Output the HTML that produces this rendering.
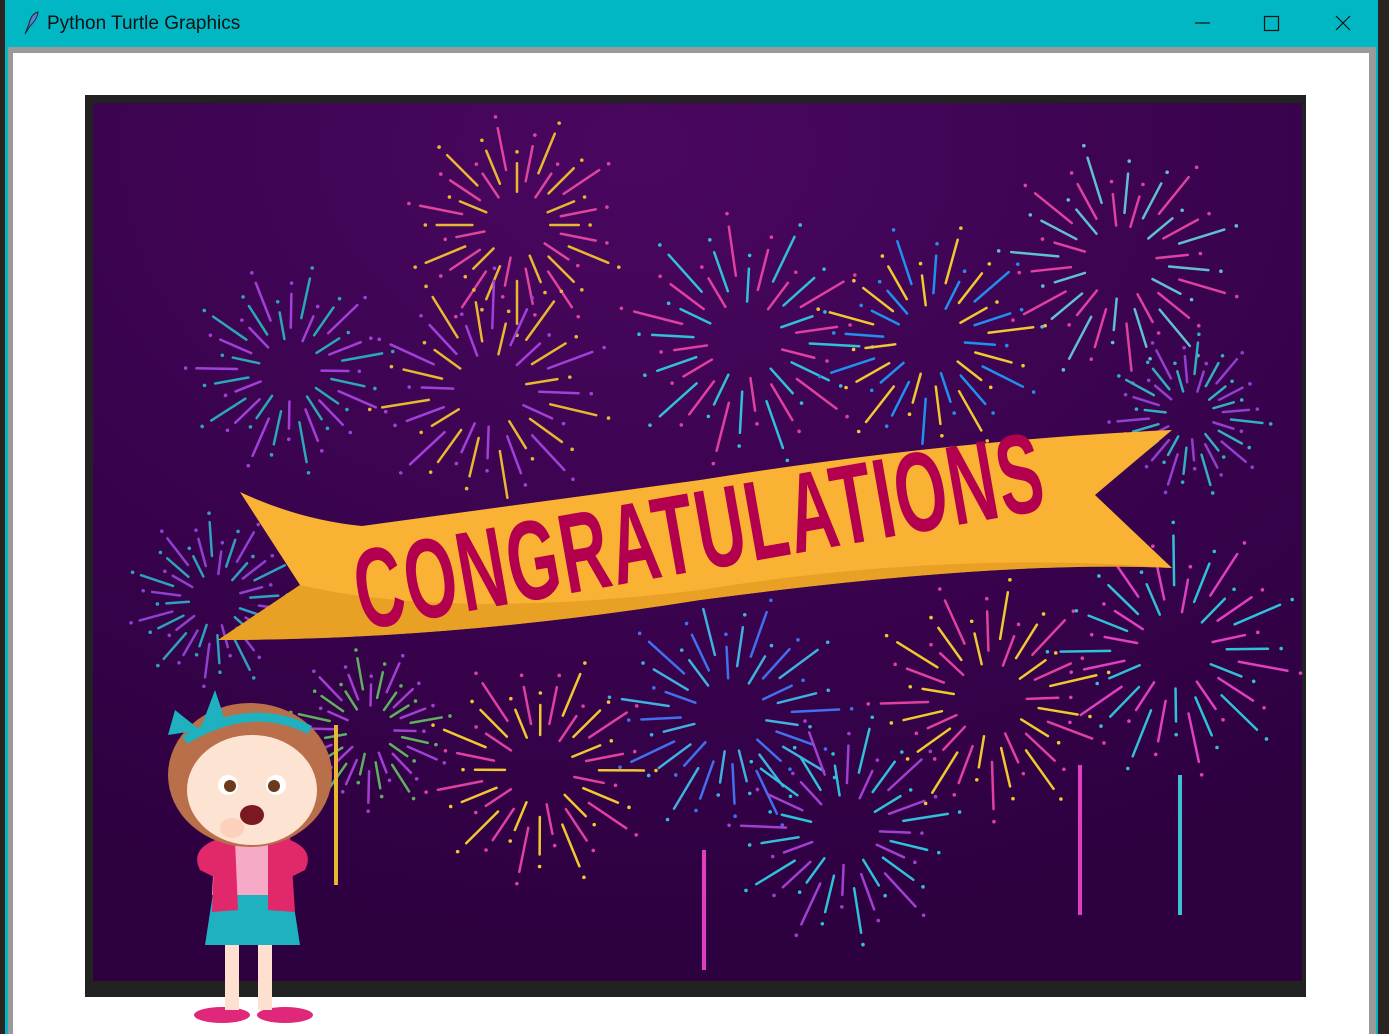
<!DOCTYPE html>
<html><head><meta charset="utf-8"><style>
html,body{margin:0;padding:0;width:1389px;height:1034px;overflow:hidden;background:#2a2520;font-family:"Liberation Sans",sans-serif}
#win{position:absolute;left:5px;top:0;width:1373px;height:1034px;background:#00b7c3}
#title{position:absolute;left:42px;top:13px;font-size:19px;color:#111}
#frame{position:absolute;left:3px;top:47px;width:1368px;height:987px;background:#9a9a9a}
#white{position:absolute;left:5px;top:6px;width:1356px;height:981px;background:#fff}
</style></head><body>
<div id="win">
<svg style="position:absolute;left:16px;top:10px" width="20" height="26" viewBox="0 0 20 26"><path d="M4 24 L8 14 Q10 4 17 2 Q16 10 9 16 Z" fill="#5a7fd0" stroke="#223" stroke-width="1"/></svg>
<div id="title">Python Turtle Graphics</div>
<svg style="position:absolute;left:1185px;top:10px" width="180" height="28"><line x1="5" y1="13" x2="20" y2="13" stroke="#111" stroke-width="1.2"/><rect x="74.5" y="6.5" width="14" height="14" fill="none" stroke="#111" stroke-width="1.2"/><path d="M146 6 L160 20 M160 6 L146 20" stroke="#111" stroke-width="1.2"/></svg>
<div id="frame"><div id="white"></div></div>
</div>
<svg id="art" style="position:absolute;left:0;top:0" width="1389" height="1034">
<defs>
<radialGradient id="bg" cx="0.45" cy="0.05" r="0.9"><stop offset="0" stop-color="#4a0760"/><stop offset="1" stop-color="#2d0040"/></radialGradient>
</defs>
<rect x="85" y="95" width="1221" height="902" fill="#222"/>
<rect x="93" y="103" width="1209" height="878" fill="url(#bg)"/>
<g id="fw"></g>
<path d="M240 492 Q300 520 362 526 L700 480 Q950 440 1172 430 L1095 495 L1172 568 Q1000 560 700 600 Q450 640 218 640 L300 585 Z" fill="#f9b233"/>
<path d="M218 640 L300 585 Q450 620 700 590 Q950 550 1172 568 Q1000 560 700 600 Q450 640 218 640Z" fill="#e19a20" opacity="0.7"/>
<text x="0" y="0" transform="translate(362,630) rotate(-10) scale(0.62,1.05)" font-family="Liberation Sans" font-weight="bold" font-size="108" fill="#b3004e" letter-spacing="3">CONGRATULATIONS</text>
<g id="girl">
<ellipse cx="222" cy="1015" rx="28" ry="8" fill="#e0287a"/><ellipse cx="285" cy="1015" rx="28" ry="8" fill="#e0287a"/>
<rect x="225" y="935" width="14" height="75" fill="#fde0cf"/><rect x="258" y="935" width="14" height="75" fill="#fde0cf"/>
<path d="M215 880 L290 880 L300 945 L205 945Z" fill="#1fb1c0"/>
<path d="M215 840 L290 840 L292 895 L212 895Z" fill="#f7a9c8"/>
<path d="M215 835 L235 840 L238 910 L212 912Z M290 835 L268 840 L268 910 L295 912Z" fill="#e0286a"/>
<path d="M200 870 Q190 850 215 840 L220 880Z M305 870 Q315 850 290 840 L285 880Z" fill="#e0286a"/>
<ellipse cx="250" cy="775" rx="82" ry="72" fill="#b86f4a"/>
<ellipse cx="252" cy="790" rx="65" ry="55" fill="#fde3d2"/>
<path d="M185 760 Q250 700 320 760 Q300 730 250 720 Q200 725 185 760Z" fill="#b86f4a"/>
<path d="M185 740 Q250 700 310 730" stroke="#1fb1c0" stroke-width="9" fill="none"/>
<path d="M200 730 L168 735 L175 710 Z M200 730 L215 690 L225 720Z" fill="#1fb1c0"/>
<circle cx="228" cy="785" r="10" fill="#fff"/><circle cx="276" cy="785" r="10" fill="#fff"/>
<circle cx="230" cy="786" r="6" fill="#6a3a1a"/><circle cx="274" cy="786" r="6" fill="#6a3a1a"/>
<ellipse cx="252" cy="815" rx="12" ry="10" fill="#7a1a20"/>
<ellipse cx="232" cy="828" rx="12" ry="10" fill="#fbd1bb"/>
</g>
</svg>
<script>
var g=document.getElementById('fw'),s='';
var F=[[517,225,95,'#e0449c','#e8b830'],[290,370,90,'#a040d8','#2aa8b8'],[490,390,105,'#e8b830','#a040d8'],[745,340,110,'#30c0d8','#e040a0'],[930,340,100,'#f0c830','#2090f0'],[1120,262,105,'#60c0d0','#e040a0'],[1190,415,70,'#9040d0','#30b0c0'],[215,600,75,'#9040d0','#30a0c0'],[730,715,105,'#4070f0','#40b0e0'],[990,700,105,'#f0c830','#e040a0'],[1175,650,110,'#30c0d8','#e040c0'],[540,770,100,'#e040a0','#f0c830'],[370,730,70,'#a040d0','#60b060'],[845,830,100,'#30c0d8','#a040d0']];
F.forEach(function(f,k){var n=32;for(var i=0;i<n;i++){var a=i/n*6.283+k,c=i%2?f[3]:f[4],r1=f[2]*(0.35+0.12*(i%3)),r2=r1+f[2]*(0.3+0.15*((i*7)%3)/2);
s+='<line x1="'+(f[0]+Math.cos(a)*r1)+'" y1="'+(f[1]+Math.sin(a)*r1)+'" x2="'+(f[0]+Math.cos(a)*r2)+'" y2="'+(f[1]+Math.sin(a)*r2)+'" stroke="'+c+'" stroke-width="2.5" stroke-linecap="round"/>';
var r3=r2+f[2]*0.12;s+='<circle cx="'+(f[0]+Math.cos(a)*r3)+'" cy="'+(f[1]+Math.sin(a)*r3)+'" r="1.8" fill="'+c+'"/>';}});
[[704,850,970,'#e040c0'],[1080,765,915,'#e040c0'],[1180,775,915,'#40c0d0'],[336,725,885,'#e8b830']].forEach(function(t){s+='<line x1="'+t[0]+'" y1="'+t[1]+'" x2="'+t[0]+'" y2="'+t[2]+'" stroke="'+t[3]+'" stroke-width="4"/>';});
g.innerHTML=s;
</script>
</body></html>
